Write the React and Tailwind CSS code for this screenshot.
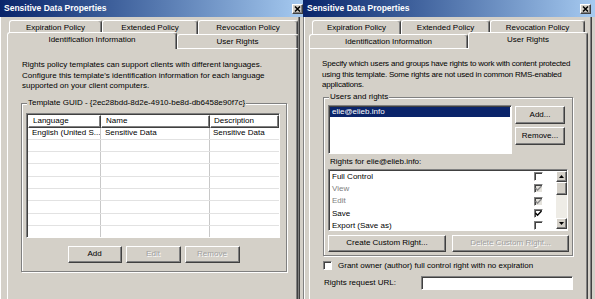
const raised =
  "border border-t-white border-l-white border-r-[#404040] border-b-[#404040] shadow-[inset_-1px_-1px_0_#808080]";
const sunken =
  "border border-t-[#808080] border-l-[#808080] border-r-white border-b-white shadow-[inset_1px_1px_0_#404040]";
const groupBox = "border border-[#808080] shadow-[inset_1px_1px_0_#fff,1px_1px_0_#fff]";

function CloseBox() {
  return (
    <div className={`w-[11px] h-[10px] shrink-0 bg-[#d4d0c8] flex items-center justify-center ${raised}`}>
      <svg width="7" height="6" viewBox="0 0 7 6">
        <path d="M1 0.5 L6 5.5 M6 0.5 L1 5.5" stroke="#000" strokeWidth="1.5" />
      </svg>
    </div>
  );
}

function TitleBar({ pr }) {
  return (
    <div className={`h-[17px] shrink-0 flex items-center justify-between pl-[4px] ${pr} bg-linear-to-r from-[#0a246a] to-[#a6caf0]`}>
      <span className="text-white font-bold text-[8.5px] leading-none">Sensitive Data Properties</span>
      <CloseBox />
    </div>
  );
}

function Tab({ w, children, selected }) {
  return (
    <div
      className={`${w} ${
        selected ? "h-[17px] -mb-px relative z-10 pb-[3px]" : "h-[14px]"
      } shrink-0 flex items-center justify-center whitespace-nowrap bg-[#d4d0c8] rounded-t-[3px] border-t border-l border-r border-t-white border-l-white border-r-[#404040] shadow-[inset_-1px_0_0_#808080]`}
    >
      {children}
    </div>
  );
}

function Btn({ w, h = "h-[18px]", disabled, children }) {
  return (
    <div
      className={`${w} ${h} shrink-0 bg-[#d4d0c8] flex items-center justify-center whitespace-nowrap ${raised} ${
        disabled ? "text-[#a0a0a0] [text-shadow:1px_1px_0_#fff]" : "text-black"
      }`}
    >
      {children}
    </div>
  );
}

function Check({ state }) {
  const bg = state === "dis" ? "bg-[#e4e2dc]" : "bg-white";
  return (
    <span className={`w-[9px] h-[9px] shrink-0 flex items-center justify-center ${bg} ${sunken}`}>
      {state !== "off" && (
        <svg width="7" height="7" viewBox="0 0 7 7">
          <path
            d="M0.5 3 L2.5 5.2 L6.5 1"
            fill="none"
            stroke={state === "dis" ? "#8a8a8a" : "#000"}
            strokeWidth="1.4"
          />
        </svg>
      )}
    </span>
  );
}

function Arrow({ up }) {
  return (
    <div className={`h-[11px] shrink-0 bg-[#d4d0c8] flex items-center justify-center ${raised}`}>
      <svg width="5" height="3" viewBox="0 0 5 3">
        <path d={up ? "M0 3 L2.5 0 L5 3 Z" : "M0 0 L2.5 3 L5 0 Z"} fill="#000" />
      </svg>
    </div>
  );
}

const rows = Array.from({ length: 9 });
const cell = "flex items-center whitespace-nowrap overflow-hidden";

function LeftWindow() {
  return (
    <div className="w-[303px] h-[299px] shrink-0 flex flex-col bg-[#d4d0c8] shadow-[inset_1px_0_0_#fff,inset_-3px_0_0_#d4d0c8,inset_-4px_0_0_#404040,inset_-5px_0_0_#808080]">
      <TitleBar pr="pr-0" />
      <div className="flex flex-col pl-[7px] pt-[3px]">
        <div className="flex ml-[2px]">
          <Tab w="w-[93px]">Expiration Policy</Tab>
          <Tab w="w-[96px]">Extended Policy</Tab>
          <Tab w="w-[100px]">Revocation Policy</Tab>
        </div>
        <div className="flex items-end h-[14px]">
          <Tab w="w-[170px]" selected>
            Identification Information
          </Tab>
          <Tab w="w-[121px]">User Rights</Tab>
        </div>
        <div className={`w-[291px] h-[260px] pt-[11px] pl-[13px] bg-[#d4d0c8] ${raised}`}>
          <p className="leading-[10.5px] pl-[1px] whitespace-nowrap">
            Rights policy templates can support clients with different languages.
            <br />
            Configure this template's identification information for each language
            <br />
            supported on your client computers.
          </p>
          <div className={`mt-[11px] w-[266px] h-[169px] flex flex-col ${groupBox}`}>
            <div className="-mt-[6px] ml-[5px] px-[1px] w-fit leading-[10px] whitespace-nowrap bg-[#d4d0c8]">
              Template GUID - {"{2ec28bdd-8d2e-4910-be8d-db6458e90f7c}"}
            </div>
            <div className={`mt-[5px] ml-[4px] w-[254px] h-[125px] bg-white flex flex-col overflow-hidden ${sunken}`}>
              <div className="flex h-[13px] shrink-0 ml-px mt-px">
                <div className={`w-[73px] pl-[4px] ${cell} ${raised}`}>Language</div>
                <div className={`w-[109px] pl-[4px] ${cell} ${raised}`}>Name</div>
                <div className={`flex-1 pl-[3px] ${cell} ${raised}`}>Description</div>
              </div>
              <div className="flex h-[12.3px] shrink-0 ml-px border-b border-[#e2e2e2]">
                <div className={`w-[73px] pl-[4px] ${cell} border-r border-[#c8c8c8]`}>English (United S...</div>
                <div className={`w-[109px] pl-[4px] ${cell} border-r border-[#c8c8c8]`}>Sensitive Data</div>
                <div className={`flex-1 pl-[3px] ${cell}`}>Sensitive Data</div>
              </div>
              {rows.map((_, i) => (
                <div key={i} className="flex h-[12.3px] shrink-0 ml-px border-b border-[#e2e2e2]">
                  <div className="w-[73px] border-r border-[#c8c8c8]" />
                  <div className="w-[109px] border-r border-[#c8c8c8]" />
                  <div className="flex-1" />
                </div>
              ))}
            </div>
            <div className="mt-[8px] flex justify-center gap-[4px] pr-[1px]">
              <Btn w="w-[54px]" h="h-[17px]">Add</Btn>
              <Btn w="w-[55px]" h="h-[17px]" disabled>Edit</Btn>
              <Btn w="w-[55px]" h="h-[17px]" disabled>Remove</Btn>
            </div>
          </div>
        </div>
      </div>
    </div>
  );
}

const rights = [
  { name: "Full Control", state: "off" },
  { name: "View", state: "dis" },
  { name: "Edit", state: "dis" },
  { name: "Save", state: "on" },
  { name: "Export (Save as)", state: "off" },
];

function RightWindow() {
  return (
    <div className="w-[292px] h-[299px] shrink-0 flex flex-col bg-[#d4d0c8] shadow-[inset_1px_0_0_#808080,inset_2px_0_0_#fff,inset_-3px_0_0_#d4d0c8,inset_-4px_0_0_#404040,inset_-5px_0_0_#808080]">
      <TitleBar pr="pr-[4px]" />
      <div className="flex flex-col pl-[6px] pt-[3px]">
        <div className="flex ml-[3px]">
          <Tab w="w-[89px]">Expiration Policy</Tab>
          <Tab w="w-[89px]">Extended Policy</Tab>
          <Tab w="w-[95px]">Revocation Policy</Tab>
        </div>
        <div className="flex items-end h-[14px]">
          <Tab w="w-[159px]">Identification Information</Tab>
          <Tab w="w-[120px]" selected>
            User Rights
          </Tab>
        </div>
        <div className={`w-[279px] h-[260px] pt-[10px] pl-[12px] bg-[#d4d0c8] ${raised}`}>
          <p className="leading-[10.5px] tracking-[-0.2px] whitespace-nowrap">
            Specify which users and groups have rights to work with content protected
            <br />
            using this template. Some rights are not used in common RMS-enabled
            <br />
            applications.
          </p>
          <div className={`mt-[6px] ml-[1px] w-[250px] h-[159px] flex flex-col pl-[4px] ${groupBox}`}>
            <div className="-mt-[6px] ml-[1px] px-[1px] w-fit leading-[10px] bg-[#d4d0c8]">Users and rights</div>
            <div className="mt-[3px] flex gap-[3px]">
              <div className={`w-[184px] h-[49px] bg-white p-[1px] ${sunken}`}>
                <div className="h-[10px] bg-[#0a246a] text-white leading-[10px] pl-[2px]">elie@elieb.info</div>
              </div>
              <div className="flex flex-col gap-[3px] pt-px">
                <Btn w="w-[50px]">Add...</Btn>
                <Btn w="w-[50px]">Remove...</Btn>
              </div>
            </div>
            <div className="mt-[3px] leading-[10px] pl-[2px]">Rights for elie@elieb.info:</div>
            <div className={`mt-[2px] w-[240px] h-[62px] bg-white flex ${sunken}`}>
              <div className="flex-1 flex flex-col pt-px">
                {rights.map((r) => (
                  <div
                    key={r.name}
                    className={`h-[12.3px] shrink-0 flex items-center justify-between pl-[3px] pr-[13px] ${
                      r.state === "dis" ? "text-[#808080]" : "text-black"
                    }`}
                  >
                    <span>{r.name}</span>
                    <Check state={r.state} />
                  </div>
                ))}
              </div>
              <div className="w-[11px] flex flex-col mt-px mb-px">
                <Arrow up />
                <div className={`h-[13px] bg-[#d4d0c8] ${raised}`} />
                <div className="flex-1 bg-[#eeece6]" />
                <Arrow />
              </div>
            </div>
            <div className="mt-[4px] flex gap-[6px]">
              <Btn w="w-[118px]" h="h-[17px]">Create Custom Right...</Btn>
              <Btn w="w-[117px]" h="h-[17px]" disabled>Delete Custom Right...</Btn>
            </div>
          </div>
          <div className="mt-[5px] ml-[1px] h-[10px] flex items-center gap-[6px]">
            <Check state="off" />
            <span>Grant owner (author) full control right with no expiration</span>
          </div>
          <div className="mt-[5px] ml-[1px] w-[250px] h-[14px] flex items-center justify-between">
            <span className="pl-[1px]">Rights request URL:</span>
            <div className={`w-[152px] h-[14px] bg-white ${sunken}`} />
          </div>
        </div>
      </div>
    </div>
  );
}

export default function App() {
  return (
    <div className="w-[595px] h-[299px] overflow-hidden flex bg-[#d4d0c8] text-[8px] leading-[10px] text-black font-['Liberation_Sans',Arial,sans-serif]">
      <LeftWindow />
      <RightWindow />
    </div>
  );
}
